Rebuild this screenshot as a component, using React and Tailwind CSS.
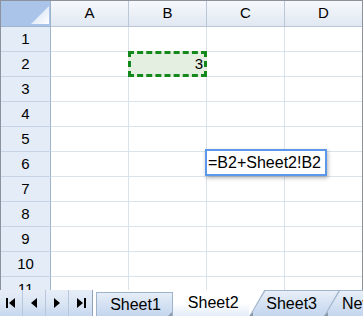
import React from "react";

const cols = ["A", "B", "C", "D"];
const rows = [1, 2, 3, 4, 5, 6, 7, 8, 9, 10, 11];

const NavIcon = ({type}) => {
    if (type === "first") {
        return (<svg width="12" height="10" viewBox="0 0 12 10">
            <rect x="1" y="0" width="2" height="10" fill="#000"/>
            <path d="M10 0 L4 5 L10 10 Z" fill="#000"/>
        </svg>)
    }
    if (type === "prev") {
        return (<svg width="12" height="10" viewBox="0 0 12 10">
            <path d="M9 0 L3 5 L9 10 Z" fill="#000"/>
        </svg>)
    }
    if (type === "next") {
        return (<svg width="12" height="10" viewBox="0 0 12 10">
            <path d="M3 0 L9 5 L3 10 Z" fill="#000"/>
        </svg>)
    }
    return (<svg width="12" height="10" viewBox="0 0 12 10">
        <path d="M2 0 L8 5 L2 10 Z" fill="#000"/>
        <rect x="9" y="0" width="2" height="10" fill="#000"/>
    </svg>)
}

const App = () => {
    return (<div className="w-[363px] h-[316px] overflow-hidden bg-white text-black font-['Liberation_Sans',Arial,sans-serif] select-none">
        {/* grid */}
        <div className="relative h-[290px] overflow-hidden border-l border-t border-r border-[#8b929c]">
            <div className="flex h-[26px]">
                <div className="relative w-[50px] h-[26px] border-r border-b border-[#9fb3ca] bg-[#a9c4e8]">
                    <div
                        className="absolute right-[1px] bottom-[2px] w-[18px] h-[18px] bg-gradient-to-br from-[#c9daf1] to-white [clip-path:polygon(100%_0,100%_100%,0_100%)]"></div>
                </div>
                {cols.map((c, i) => (<div key={c}
                                          className={`${i < 3 ? "w-[78px] border-r" : "w-[77px]"} h-[26px] border-b border-[#b9c7d9] flex items-center justify-center bg-gradient-to-b from-[#f6f8fc] to-[#e1e8f2] text-[15px]`}>
                    {c}
                </div>))}
            </div>
            {rows.map(r => (<div key={r} className="flex h-[25px]">
                <div
                    className="w-[50px] h-[25px] border-r border-b border-r-[#9fb3ca] border-b-[#c6d3e3] bg-[#e4ecf7] flex items-center justify-center text-[15px]">
                    {r}
                </div>
                {cols.map((c, i) => (<div key={c}
                                          className={`${i < 3 ? "w-[78px] border-r" : "w-[77px]"} h-[25px] border-b border-[#dae2ec] bg-white`}></div>))}
            </div>))}

            {/* copy selection on B2 */}
            <div
                className="absolute left-[127px] top-[50px] w-[79px] h-[26px] border-[3px] border-dashed border-[#12891a] bg-[#e5efe1] flex items-center justify-end pr-[1px] text-[15px]">
                3
            </div>

            {/* formula editor */}
            <div
                className="absolute left-[204px] top-[148px] w-[122px] h-[27px] border-2 border-[#5b97ea] bg-white shadow-[1px_2px_4px_rgba(0,0,0,0.3)] flex items-center pl-[1px] text-[16px] whitespace-nowrap">
                =B2+Sheet2!B2
            </div>
        </div>

        {/* sheet tabs */}
        <div className="relative flex h-[26px] bg-white">
            <div className="flex w-[93px] h-full bg-gradient-to-b from-[#e6edf7] via-[#dbe6f4] to-[#c6d7ee] border-r border-[#8ea3bd]">
                <div className="w-[23px] h-full flex items-center justify-center border-r border-[#b7c8dd]"><NavIcon type="first"/></div>
                <div className="w-[23px] h-full flex items-center justify-center border-r border-[#b7c8dd]"><NavIcon type="prev"/></div>
                <div className="w-[23px] h-full flex items-center justify-center border-r border-[#b7c8dd]"><NavIcon type="next"/></div>
                <div className="w-[23px] h-full flex items-center justify-center"><NavIcon type="last"/></div>
            </div>
            <div className="w-[3px]"></div>
            <div
                className="relative mt-[2px] w-[79px] h-[24px] border border-b-0 border-[#9fb3cb] bg-gradient-to-b from-[#e6eef8] to-[#c3d5ee] flex items-center justify-center pl-[2px] text-[16px]">
                Sheet1
                <div className="absolute right-0 bottom-0 w-[4px] h-[4px] bg-[#8a98aa] [clip-path:polygon(100%_0,100%_100%,0_100%)]"></div>
            </div>
            <div
                className="w-[78px] h-full bg-gradient-to-b from-white via-white to-[#e3ecf8] flex items-center justify-center pl-[4px] text-[16px]">
                Sheet2
            </div>
            <div className="relative w-[93px] h-full bg-[#9fb4cd] [clip-path:polygon(15px_0,100%_0,100%_100%,0_100%)]">
                <div
                    className="absolute inset-0 top-[1px] left-[1px] bg-gradient-to-b from-[#e8eff8] to-[#c3d5ee] [clip-path:polygon(15px_0,100%_0,100%_100%,0_100%)] flex items-center pl-[16px] text-[16px]">
                    Sheet3
                </div>
                <div className="absolute left-0 bottom-0 w-[4px] h-[4px] bg-[#8a98aa] [clip-path:polygon(0_100%,100%_0,100%_100%)]"></div>
            </div>
            <div className="relative -ml-[16px] w-[40px] h-full bg-[#9fb4cd] [clip-path:polygon(15px_0,100%_0,100%_100%,0_100%)]">
                <div
                    className="absolute inset-0 top-[1px] left-[1px] bg-gradient-to-b from-[#e8eff8] to-[#c3d5ee] [clip-path:polygon(15px_0,100%_0,100%_100%,0_100%)] flex items-center pl-[17px] text-[16px] whitespace-nowrap">
                    New
                </div>
                <div className="absolute left-0 bottom-0 w-[4px] h-[4px] bg-[#8a98aa] [clip-path:polygon(0_100%,100%_0,100%_100%)]"></div>
            </div>
        </div>
    </div>);
}

export default App;
